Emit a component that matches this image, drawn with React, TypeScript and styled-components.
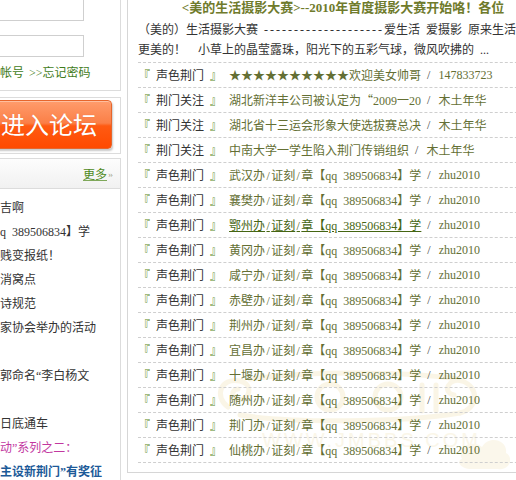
import React from "react";
import styled, { createGlobalStyle } from "styled-components";

const GlobalStyle = createGlobalStyle`
  html, body {
    margin: 0;
    padding: 0;
    background: #fff;
    overflow: hidden;
  }
  body {
    font-family: "Liberation Serif", "Noto Sans CJK SC", serif;
    font-size: 12px;
    color: #333;
    word-spacing: 3px;
  }
`;

const Page = styled.div`
  display: flex;
  align-items: flex-start;
  gap: 6px;
  width: 600px;
  height: 480px;
  overflow: hidden;
`;

/* ---------- left column ---------- */

const LeftColumn = styled.aside`
  flex: none;
  width: 121px;
  height: 480px;
  overflow: hidden;
  display: flex;
  flex-direction: column;
`;

const SideBox = styled.div`
  margin-left: -1px;
  border: 1px solid #dcdcdc;
  background: #fff;
`;

const LoginBox = styled(SideBox)`
  margin-top: -12px;
  padding: 10px 0 7px;
  display: flex;
  flex-direction: column;
`;

const TextField = styled.input`
  box-sizing: border-box;
  display: block;
  width: 102px;
  height: 22px;
  margin: 0 0 0 -18px;
  padding: 0 4px;
  border: 1px solid #cfcfcf;
  background: #fff;
  outline: none;
  & + & {
    margin-top: 14px;
  }
`;

const LoginLinks = styled.div`
  display: flex;
  gap: 5px;
  margin-top: 6px;
  line-height: 20px;
  white-space: nowrap;
`;

const GreenLink = styled.a`
  color: #3f7c1a;
  text-decoration: none;
  word-spacing: 0;
`;

const ButtonBox = styled(SideBox)`
  margin-top: 6px;
  padding: 2px 0 4px;
`;

const EnterButton = styled.a`
  box-sizing: border-box;
  display: flex;
  align-items: center;
  width: 135px;
  height: 49px;
  margin-left: -23px;
  padding: 0 0 2px 23px;
  border: 1px solid #e6662c;
  border-radius: 4px;
  background: linear-gradient(
    to bottom,
    #ff9c6c 0%,
    #fb7f47 47%,
    #ff5a12 53%,
    #ff4a00 100%
  );
  box-shadow: 1px 2px 2px rgba(0, 0, 0, 0.22), inset 0 1px 0 rgba(255, 255, 255, 0.35);
  color: #fff;
  font-family: "Noto Sans CJK SC", sans-serif;
  font-size: 24px;
  line-height: 1;
  text-decoration: none;
  text-shadow: 0 0 1px rgba(200, 60, 0, 0.4);
`;

const NewsBox = styled(SideBox)`
  margin-top: 4px;
  flex: 1;
`;

const NewsHeader = styled.div`
  display: flex;
  align-items: center;
  justify-content: flex-end;
  height: 29px;
  padding-right: 8px;
  border-bottom: 1px solid #dcdcdc;
  background: linear-gradient(to bottom, #fdfdfd, #f1f1f1);
`;

const MoreLink = styled.a`
  color: #4f8a22;
  text-decoration: underline;
  text-decoration-color: #7fa85a;
`;

const MoreArrows = styled.span`
  margin-left: 1px;
  color: #9a9a80;
  font-size: 9px;
  letter-spacing: -1px;
`;

const NewsList = styled.ul`
  list-style: none;
  margin: 0;
  padding: 7px 0 0;
`;

const NewsItem = styled.li<{ $tone?: "plain" | "purple" | "blue" }>`
  height: 24px;
  line-height: 24px;
  white-space: pre;
  overflow: hidden;
  color: ${(p) => (p.$tone === "purple" ? "#c2389f" : p.$tone === "blue" ? "#1c5a98" : "#333")};
  font-weight: ${(p) => (p.$tone === "blue" ? 700 : 400)};
`;

/* ---------- main panel ---------- */

const MainPanel = styled.section`
  position: relative;
  isolation: isolate;
  flex: none;
  width: 410px;
  margin-top: -4px;
  padding: 3px 10px 9px;
  border: 1px solid #d6d6d6;
  background: #fff;
`;

const Watermark = styled.svg`
  position: absolute;
  left: 82px;
  top: 370px;
  z-index: -1;
  opacity: 0.45;
  pointer-events: none;
`;

const Title = styled.h2`
  margin: 0;
  height: 16px;
  line-height: 16px;
  text-align: center;
  white-space: nowrap;
  color: #6f7b2c;
  font-size: 13px;
  font-weight: 700;
  word-spacing: 0;
`;

const Intro = styled.div`
  margin-top: 4px;
  padding-bottom: 2px;
  border-bottom: 1px dashed #cfcfcf;
`;

const IntroLine = styled.p`
  margin: 0;
  height: 20px;
  line-height: 20px;
  white-space: pre;
  overflow: hidden;
  color: #333;
`;

const Dashes = styled.span`
  letter-spacing: 2px;
`;

const TopicList = styled.ul`
  list-style: none;
  margin: 0;
  padding: 0;
`;

const TopicRow = styled.li`
  display: flex;
  align-items: center;
  height: 24px;
  border-bottom: 1px dashed #cfcfcf;
  white-space: nowrap;
`;

const Bracket = styled.span`
  color: #5a8c1c;
`;

const Forum = styled.span`
  margin: 0 6px;
  color: #333;
`;

const TopicLink = styled.a<{ $active?: boolean }>`
  margin-left: 7px;
  color: ${(p) => (p.$active ? "#456512" : "#646f34")};
  text-decoration: ${(p) => (p.$active ? "underline" : "none")};
`;

const Slash = styled.span`
  margin: 0 1.4px;
`;

/* opening quote set in the CJK face so it takes a full cell */
const Quote = styled.span`
  font-family: "Noto Sans CJK SC", sans-serif;
`;

const Sep = styled.span`
  margin: 0 8px 0 6px;
  color: #444;
`;

const Author = styled.a`
  color: #646f34;
  text-decoration: none;
`;

/* ---------- data ---------- */

const sideNews: { text: string; tone?: "plain" | "purple" | "blue" }[] = [
  { text: "吉啊" },
  { text: "q 389506834】学" },
  { text: "贱变报纸！" },
  { text: "消窝点" },
  { text: "诗规范" },
  { text: "家协会举办的活动" },
  { text: "" },
  { text: "郭命名“李白杨文" },
  { text: "" },
  { text: "日底通车" },
  { text: "动”系列之二：", tone: "purple" },
  { text: "主设新荆门”有奖征", tone: "blue" },
];

type Topic = { forum: string; title: React.ReactNode; author: string; active?: boolean };

const cities = ["武汉", "襄樊", "鄂州", "黄冈", "咸宁", "赤壁", "荆州", "宜昌", "十堰", "随州", "荆门", "仙桃"];

const topics: Topic[] = [
  { forum: "声色荆门", title: "★★★★★★★★★★欢迎美女帅哥", author: "147833723" },
  {
    forum: "荆门关注",
    title: (
      <>
        湖北新洋丰公司被认定为<Quote>“</Quote>2009一20
      </>
    ),
    author: "木土年华",
  },
  { forum: "荆门关注", title: "湖北省十三运会形象大使选拔赛总决", author: "木土年华" },
  { forum: "荆门关注", title: "中南大学一学生陷入荆门传销组织", author: "木土年华" },
  ...cities.map((c) => ({
    forum: "声色荆门",
    title: (
      <>
        {c}办<Slash>/</Slash>证刻<Slash>/</Slash>章【qq 389506834】学
      </>
    ),
    author: "zhu2010",
    active: c === "鄂州",
  })),
];

/* faint site stamp behind the topic list */
const SiteStamp = () => (
  <Watermark width="300" height="112" viewBox="0 0 300 112">
    <g fill="none" stroke="#f6ebc9" strokeWidth="5" strokeLinecap="round">
      <path d="M18 40 C 4 30, 10 10, 30 14 C 44 17, 40 34, 28 32 C 20 30, 22 22, 28 22" />
      <path d="M30 48 C 80 56, 190 56, 250 46" />
      <path d="M40 12 C 100 4, 190 4, 248 12" />
      <path d="M250 46 C 268 42, 270 20, 252 14 C 238 10, 232 26, 244 28" />
      <circle cx="120" cy="30" r="13" />
      <circle cx="178" cy="30" r="13" />
      <path d="M212 18 L 212 44 M 226 18 L 226 44" />
    </g>
    <text
      x="52"
      y="80"
      fill="#f6ecce"
      fontFamily="Liberation Sans, sans-serif"
      fontSize="20"
      letterSpacing="3"
    >
      WWW.JMBBS.COM
    </text>
    <path
      d="M252 92 C 246 80, 262 72, 272 80 C 278 68, 298 72, 296 86 C 304 90, 300 104, 288 102 L 262 102 C 250 102, 246 94, 252 92 Z"
      fill="#f8efd4"
    />
  </Watermark>
);

export default function App() {
  return (
    <>
      <GlobalStyle />
      <Page>
        <LeftColumn>
          <LoginBox>
            <TextField type="text" aria-label="用户名" />
            <TextField type="password" aria-label="密码" />
            <LoginLinks>
              <GreenLink href="#">帐号</GreenLink>
              <GreenLink href="#">&gt;&gt;忘记密码</GreenLink>
            </LoginLinks>
          </LoginBox>

          <ButtonBox>
            <EnterButton href="#">进入论坛</EnterButton>
          </ButtonBox>

          <NewsBox>
            <NewsHeader>
              <MoreLink href="#">更多</MoreLink>
              <MoreArrows>››</MoreArrows>
            </NewsHeader>
            <NewsList>
              {sideNews.map((n, i) => (
                <NewsItem key={i} $tone={n.tone}>
                  {n.text}
                </NewsItem>
              ))}
            </NewsList>
          </NewsBox>
        </LeftColumn>

        <MainPanel>
          <SiteStamp />
          <Title>&lt;美的生活摄影大赛&gt;--2010年首度摄影大赛开始咯！各位</Title>
          <Intro>
            <IntroLine>
              （美的）生活摄影大赛 <Dashes>--------------------</Dashes>爱生活 爱摄影 原来生活
            </IntroLine>
            <IntroLine>更美的！  小草上的晶莹露珠，阳光下的五彩气球，微风吹拂的 ...</IntroLine>
          </Intro>
          <TopicList>
            {topics.map((t, i) => (
              <TopicRow key={i}>
                <Bracket>『</Bracket>
                <Forum>{t.forum}</Forum>
                <Bracket>』</Bracket>
                <TopicLink href="#" $active={t.active}>
                  {t.title}
                </TopicLink>
                <Sep>/</Sep>
                <Author href="#">{t.author}</Author>
              </TopicRow>
            ))}
          </TopicList>
        </MainPanel>
      </Page>
    </>
  );
}
